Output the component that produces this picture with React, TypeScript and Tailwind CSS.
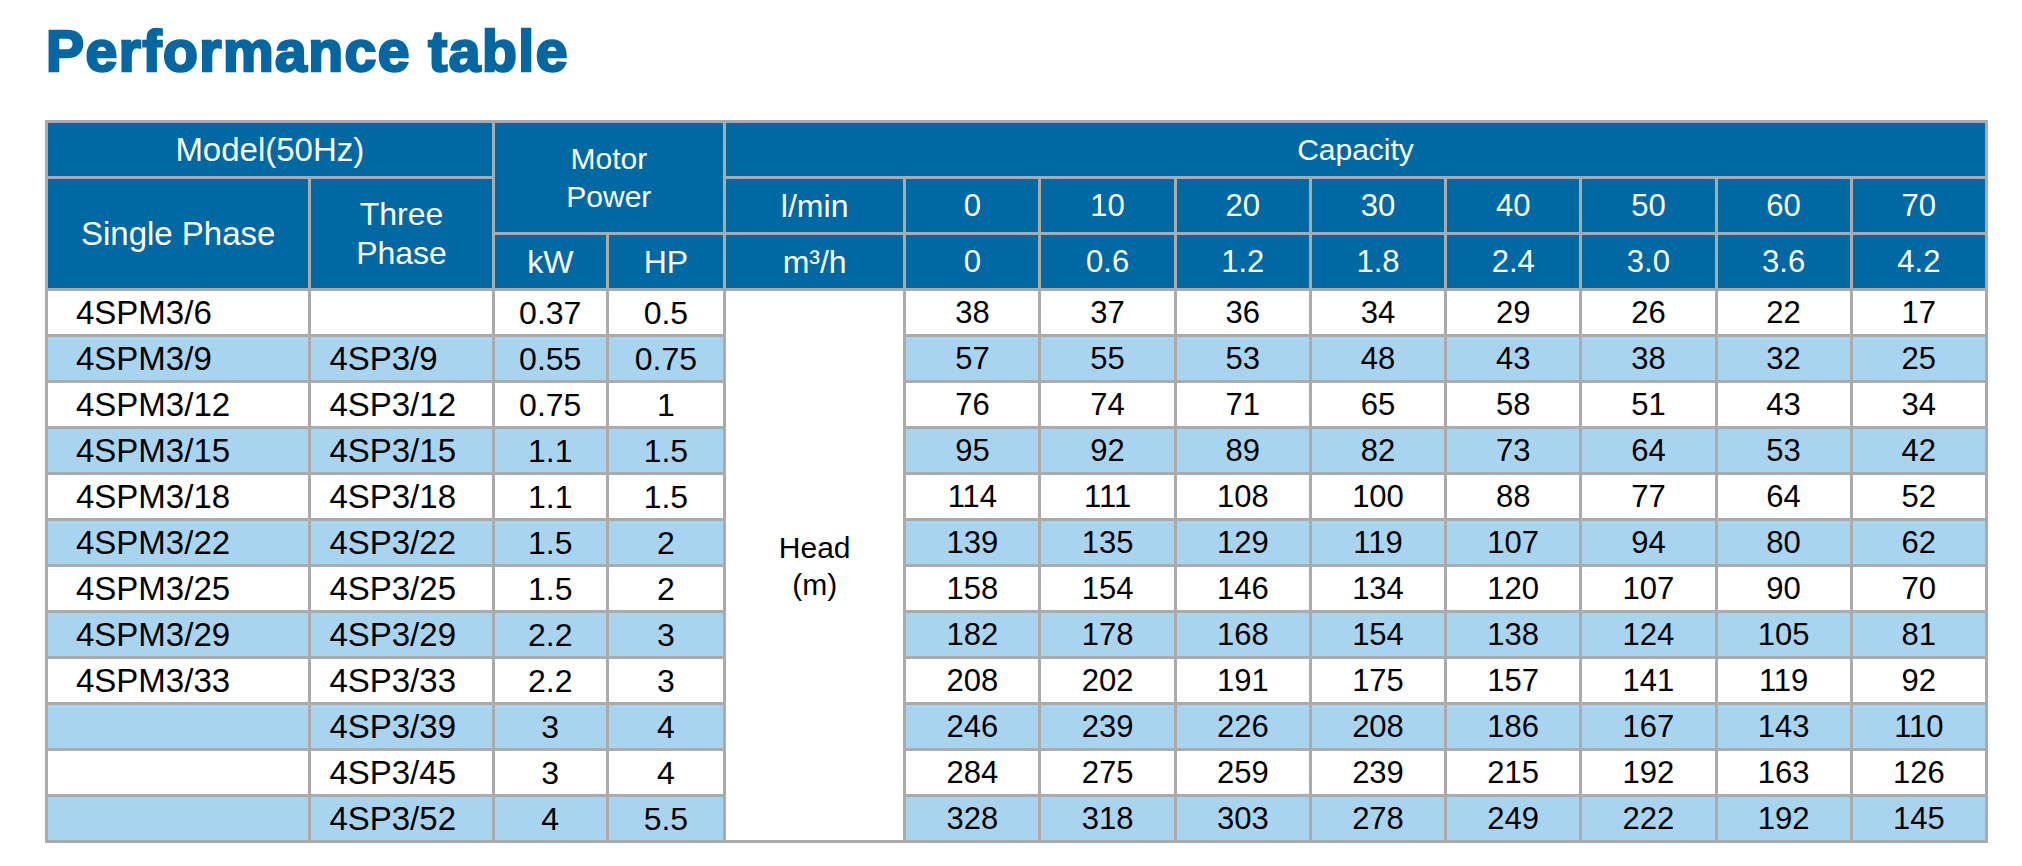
import React from "react";

type Row = {
  single: string;
  three: string;
  kw: string;
  hp: string;
  head: number[];
};

const rows: Row[] = [
  { single: "4SPM3/6", three: "", kw: "0.37", hp: "0.5", head: [38, 37, 36, 34, 29, 26, 22, 17] },
  { single: "4SPM3/9", three: "4SP3/9", kw: "0.55", hp: "0.75", head: [57, 55, 53, 48, 43, 38, 32, 25] },
  { single: "4SPM3/12", three: "4SP3/12", kw: "0.75", hp: "1", head: [76, 74, 71, 65, 58, 51, 43, 34] },
  { single: "4SPM3/15", three: "4SP3/15", kw: "1.1", hp: "1.5", head: [95, 92, 89, 82, 73, 64, 53, 42] },
  { single: "4SPM3/18", three: "4SP3/18", kw: "1.1", hp: "1.5", head: [114, 111, 108, 100, 88, 77, 64, 52] },
  { single: "4SPM3/22", three: "4SP3/22", kw: "1.5", hp: "2", head: [139, 135, 129, 119, 107, 94, 80, 62] },
  { single: "4SPM3/25", three: "4SP3/25", kw: "1.5", hp: "2", head: [158, 154, 146, 134, 120, 107, 90, 70] },
  { single: "4SPM3/29", three: "4SP3/29", kw: "2.2", hp: "3", head: [182, 178, 168, 154, 138, 124, 105, 81] },
  { single: "4SPM3/33", three: "4SP3/33", kw: "2.2", hp: "3", head: [208, 202, 191, 175, 157, 141, 119, 92] },
  { single: "", three: "4SP3/39", kw: "3", hp: "4", head: [246, 239, 226, 208, 186, 167, 143, 110] },
  { single: "", three: "4SP3/45", kw: "3", hp: "4", head: [284, 275, 259, 239, 215, 192, 163, 126] },
  { single: "", three: "4SP3/52", kw: "4", hp: "5.5", head: [328, 318, 303, 278, 249, 222, 192, 145] },
];

const lpm = ["0", "10", "20", "30", "40", "50", "60", "70"];
const m3h = ["0", "0.6", "1.2", "1.8", "2.4", "3.0", "3.6", "4.2"];

const th = "border-[3px] border-[#ababab] bg-[#0068a3] text-white font-normal text-center align-middle p-0";
const td = "border-[3px] border-[#ababab] text-black text-center align-middle p-0 h-[46px]";

export default function App() {
  return (
    <div className="min-h-[866px] bg-white font-['Liberation_Sans',Arial,sans-serif] text-[30px] leading-none">
      {/* heavy title, the original uses a black-weight face */}
      <h1 className="pl-[46px] pt-[23px] text-[57px] font-bold leading-[57px] tracking-[1.5px] text-[#0567a2] [-webkit-text-stroke:2.5px_#0567a2]">
        Performance table
      </h1>

      <table className="ml-[45px] mt-[40px] w-[1943px] table-fixed border-collapse">
        <colgroup>
          <col className="w-[263px]" />
          <col className="w-[183px]" />
          <col className="w-[114px]" />
          <col className="w-[117px]" />
          <col className="w-[180px]" />
          {lpm.map((v) => (
            <col key={v} className="w-[135px]" />
          ))}
        </colgroup>
        <thead>
          <tr className="h-[56px]">
            <th colSpan={2} className={`${th} text-[33px]`}>Model(50Hz)</th>
            <th colSpan={2} rowSpan={2} className={`${th} text-[30px] leading-[38px]`}>
              Motor
              <br />
              Power
            </th>
            <th colSpan={9} className={`${th} text-[30px]`}>Capacity</th>
          </tr>
          <tr className="h-[56px]">
            <th rowSpan={2} className={`${th} text-[33px]`}>Single Phase</th>
            <th rowSpan={2} className={`${th} text-[32px] leading-[39px]`}>
              Three
              <br />
              Phase
            </th>
            <th className={`${th} text-[32px]`}>l/min</th>
            {lpm.map((v) => (
              <th key={v} className={`${th} text-[31px]`}>{v}</th>
            ))}
          </tr>
          <tr className="h-[56px]">
            <th className={`${th} text-[32px]`}>kW</th>
            <th className={`${th} text-[32px]`}>HP</th>
            <th className={`${th} text-[32px]`}>m³/h</th>
            {m3h.map((v, i) => (
              <th key={i} className={`${th} text-[31px]`}>{v}</th>
            ))}
          </tr>
        </thead>
        <tbody>
          {rows.map((r, i) => {
            const bg = i % 2 === 1 ? "bg-[#a9d4f0]" : "bg-white";
            return (
              <tr key={i} className="h-[46px]">
                <td className={`${td} ${bg} !text-left pl-[28px] text-[33px]`}>{r.single}</td>
                <td className={`${td} ${bg} !text-left pl-[18px] text-[33px]`}>{r.three}</td>
                <td className={`${td} ${bg} text-[32px]`}>{r.kw}</td>
                <td className={`${td} ${bg} text-[32px]`}>{r.hp}</td>
                {i === 0 && (
                  <td rowSpan={rows.length} className={`${td} bg-white leading-[37px]`}>
                    Head
                    <br />
                    (m)
                  </td>
                )}
                {r.head.map((h, j) => (
                  <td key={j} className={`${td} ${bg} text-[31px]`}>{h}</td>
                ))}
              </tr>
            );
          })}
        </tbody>
      </table>
    </div>
  );
}
